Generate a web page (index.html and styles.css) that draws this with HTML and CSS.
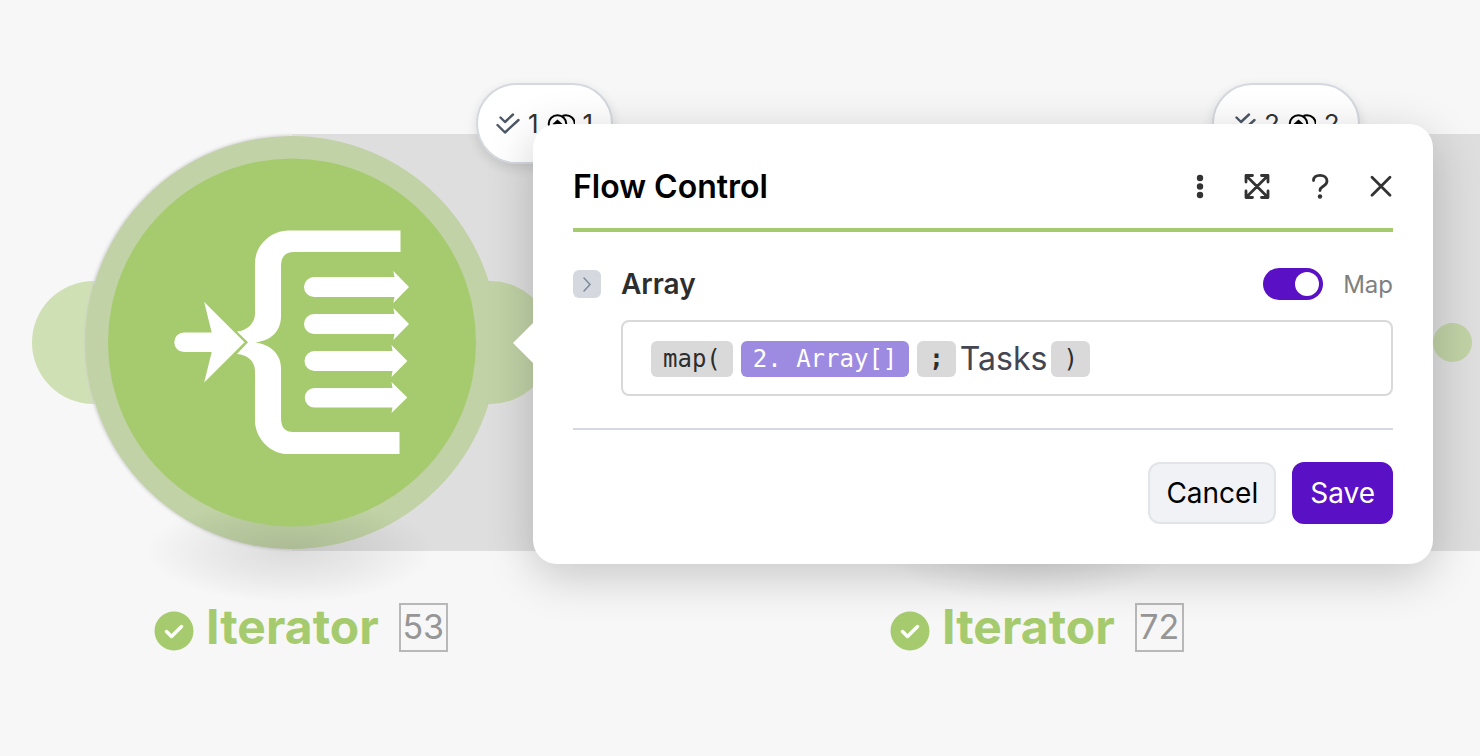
FILE: index.html
```html
<!DOCTYPE html>
<html lang="en">
<head>
<meta charset="utf-8">
<title>Flow Control</title>
<link rel="stylesheet" href="styles.css">
</head>
<body>
<main class="canvas">
  <div class="track"></div>
  <svg class="node" width="560" height="500" viewBox="0 120 560 500" aria-hidden="true">
    <defs>
      <radialGradient id="ground"><stop offset="0" stop-color="#000" stop-opacity=".11"/><stop offset=".5" stop-color="#000" stop-opacity=".06"/><stop offset="1" stop-color="#000" stop-opacity="0"/></radialGradient>
      <filter id="soft" x="-5%" y="-5%" width="110%" height="110%"><feGaussianBlur stdDeviation="1.5"/></filter>
    </defs>
    <circle cx="93.500" cy="342.500" r="61.500" fill="#cfe0b4"/>
    <circle cx="490.500" cy="342.500" r="61.500" fill="#c1d2a6"/>
    <path d="M292 135a207.500 207.500 0 0 0 0 415" fill="#d3d3d3" filter="url(#soft)"/>
    <path d="M94 281a208 208 0 0 0 0 123z" fill="#c4d5aa"/>
    <ellipse cx="292" cy="342.500" rx="206" ry="206.500" fill="#c1d2a6"/>
    <ellipse cx="290" cy="551" rx="145" ry="52" fill="url(#ground)"/>
    <circle cx="292" cy="342.500" r="184" fill="#a6cb6f"/>
    <g fill="#fff">
      <path d="M400.500 230.500H288C270 231 255 246 255 263V314C255 323 247 331 237 331.500L248 342.300L237 354C247 354.500 255 361 255 371V422C256 439 270 453 286 454H399.500V432H293Q281 432 281 418V368C281 354 270 344 255 342.500C270 341 281 332 281 316V266Q281 252 294 252H400.500z"/>
      <path d="M184 332.500H211.700L204.200 302L244.500 342.300L204.200 382.500L211.700 352H184A9.750 9.750 0 0 1 184 332.500z"/>
      <path id="out" d="M314 277H394.500L393.300 271L409 287L393.300 303L394.500 297H314A10 10 0 0 1 314 277z"/>
      <use href="#out" y="37"/>
      <path d="M314.500 351H392.500L391.500 345L407.300 361L391.500 377L392.500 371H314.500A10 10 0 0 1 314.500 351z"/>
      <path d="M314.500 388H392.500L391.500 382L407.300 397.500L391.500 413L392.500 407.500H314.500A9.750 9.750 0 0 1 314.500 388z"/>
    </g>
  </svg>
  <div class="ground-shadow"></div>
  <div class="port"></div>

  <div class="bubble bubble-first">
    <svg width="24" height="24" viewBox="0 0 24 24" class="ticks"><path d="M4.500 5.500l4.500 4.500 8-7.500M1.500 13l7.500 7.500L22.500 8"/></svg>
    <span>1</span>
    <svg width="28" height="24" viewBox="0 0 28 24" class="coins"><circle cx="10.500" cy="12" r="8.800"/><path d="M15.500 4c1.500-.8 2.500-.8 3.500-.8a8.800 8.800 0 0 1 0 17.600c-1 0-2 0-3.500-.8"/><path class="solid" d="M10.500 7.500l5 4.500-5 4.500-5-4.500z"/></svg>
    <span>1</span>
  </div>
  <div class="bubble bubble-second">
    <svg width="24" height="24" viewBox="0 0 24 24" class="ticks"><path d="M4.500 5.500l4.500 4.500 8-7.500M1.500 13l7.500 7.500L22.500 8"/></svg>
    <span>2</span>
    <svg width="28" height="24" viewBox="0 0 28 24" class="coins"><circle cx="10.500" cy="12" r="8.800"/><path d="M15.500 4c1.500-.8 2.500-.8 3.500-.8a8.800 8.800 0 0 1 0 17.600c-1 0-2 0-3.500-.8"/><path class="solid" d="M10.500 7.500l5 4.500-5 4.500-5-4.500z"/></svg>
    <span>2</span>
  </div>

  <div class="caption caption-first">
    <svg width="40" height="40" viewBox="0 0 40 40" class="badge"><circle cx="20" cy="20" r="19.500"/><path d="M12.500 20.500l5 5 10-10"/></svg>
    <strong>Iterator</strong><span class="number">53</span>
  </div>
  <div class="caption caption-second">
    <svg width="40" height="40" viewBox="0 0 40 40" class="badge"><circle cx="20" cy="20" r="19.500"/><path d="M12.500 20.500l5 5 10-10"/></svg>
    <strong>Iterator</strong><span class="number">72</span>
  </div>

  <form class="dialog" role="dialog" aria-labelledby="title">
    <header class="head">
      <h1 id="title">Flow Control</h1>
      <div class="tools">
        <button type="button" aria-label="More"><svg width="8" height="28" viewBox="0 0 8 28"><g fill="#333"><circle cx="4" cy="5" r="3.200"/><circle cx="4" cy="13.500" r="3.200"/><circle cx="4" cy="22" r="3.200"/></g></svg></button>
        <button type="button" aria-label="Expand"><svg width="26" height="28" viewBox="0 0 26 28" class="line"><path d="M2 9V2.500h6.500M17.500 2.500H24V9M24 18v6.500h-6.500M8.500 24.500H2V18M2.500 3l21 21M23.500 3l-21 21"/></svg></button>
        <button type="button" aria-label="Help"><svg width="20" height="28" viewBox="0 0 20 28" class="line"><path d="M3.500 7.500C3.500 4 6 2.300 10 2.300s7 2.200 7 5.700-2.500 4.500-4.500 5.800c-2 1.200-2.500 1.700-2.500 3.700"/><circle cx="10" cy="23.500" r="2.200" class="dot"/></svg></button>
        <button type="button" aria-label="Close"><svg width="22" height="28" viewBox="0 0 22 28" class="line"><path d="M2 4.200l18 18M20 4.200l-18 18"/></svg></button>
      </div>
    </header>
    <div class="field-head">
      <button type="button" class="fold" aria-label="Expand field"><svg width="28" height="28" viewBox="0 0 28 28"><path d="M11 8l6 6.500-6 6.500"/></svg></button>
      <span class="field-name" id="field">Array</span>
      <label class="map"><input type="checkbox" role="switch" checked>Map</label>
    </div>
    <div class="formula" role="textbox" contenteditable="true" spellcheck="false" aria-labelledby="field"><span class="chip">map(</span><span class="chip chip-value">2. Array[]</span><span class="chip chip-sep">;</span><span class="word">Tasks</span><span class="chip">)</span></div>
    <footer class="foot">
      <button type="button" class="btn">Cancel</button>
      <button type="submit" class="btn btn-main">Save</button>
    </footer>
  </form>
</main>
</body>
</html>
```
FILE: styles.css
```css
* { box-sizing: border-box; }
body { margin: 0; background: #f7f7f7; font-family: Inter, "Liberation Sans", sans-serif; }
button { font: inherit; border: 0; padding: 0; background: none; cursor: pointer; }
svg { display: block; flex: none; }

.canvas { position: relative; min-height: 100vh; overflow: hidden; }
.track { position: absolute; left: 292px; right: 0; top: 134px; height: 417px; background: #dedede; }
.node { position: absolute; left: 0; top: 120px; }
.ground-shadow {
  position: absolute; left: 882px; top: 499px; width: 290px; height: 104px;
  background: radial-gradient(closest-side, rgba(0, 0, 0, .11), rgba(0, 0, 0, .06) 50%, transparent);
}
.port { position: absolute; left: 1433px; top: 323px; width: 39px; height: 39px; border-radius: 50%; background: #c1d2a6; }

.bubble {
  position: absolute; top: 83px; height: 81px; padding: 0 18px;
  display: flex; align-items: center; gap: 8px;
  border: 2px solid #d5d9df; border-radius: 41px; background: #fff;
  box-shadow: 0 4px 12px rgba(0, 0, 0, .12);
  font-size: 26px; color: #333;
}
.bubble-first { left: 476px; }
.bubble-second { left: 1212px; }
.ticks { fill: none; stroke: #4d5766; stroke-width: 2.400; stroke-linecap: round; stroke-linejoin: round; }
.coins { fill: none; stroke: #000; stroke-width: 2; }
.coins .solid { fill: #000; stroke: none; }

.caption { position: absolute; top: 598px; display: flex; align-items: center; }
.caption-first { left: 154px; }
.caption-second { left: 890px; }
.caption strong { margin-left: 12px; font-size: 48px; line-height: 58px; font-weight: 700; color: #a6cb6f; }
.badge { fill: #a6cb6f; margin-top: 8px; }
.badge path { fill: none; stroke: #fff; stroke-width: 3.500; stroke-linecap: round; stroke-linejoin: round; }
.number {
  margin-left: 20px; width: 49px; height: 49px; border: 2px solid #b8b8b8;
  font-size: 34px; line-height: 44px; text-align: center; color: #969696;
}

.dialog {
  position: absolute; left: 533px; top: 124px; width: 900px; padding: 40px;
  border-radius: 24px; background: #fff; box-shadow: 0 12px 48px rgba(0, 0, 0, .2);
}
.dialog::before {
  content: ""; position: absolute; left: -20px; top: 199px;
  border: 20px solid transparent; border-left: 0; border-right-color: #fff;
}
.head { display: flex; align-items: center; justify-content: space-between; height: 68px; padding-bottom: 18px; border-bottom: 4px solid #a6cb6f; }
.head h1 { margin: 0; font-size: 32px; line-height: 40px; font-weight: 600; color: #000; }
.tools { display: flex; gap: 40px; padding-right: 1px; }
.line { fill: none; stroke: #333; stroke-width: 2.800; stroke-linecap: round; stroke-linejoin: round; }
.line .dot { fill: #333; stroke: none; }

.field-head { display: flex; align-items: center; height: 40px; margin-top: 32px; }
.fold { border-radius: 6px; background: #d5d9df; }
.fold path { fill: none; stroke: #7c889b; stroke-width: 1.500; stroke-linecap: round; }
.field-name { margin-left: 20px; font-size: 28px; font-weight: 600; color: #2d2d2d; }
.map { display: flex; align-items: center; gap: 20px; margin-left: auto; font-size: 24px; color: #808080; }
.map input { appearance: none; margin: 0; width: 60px; height: 32px; padding: 4px; border-radius: 16px; background: #5a10c5; }
.map input::before { content: ""; display: block; width: 24px; height: 24px; border-radius: 50%; background: #fff; }
.map input:checked::before { margin-left: auto; }

.formula {
  display: flex; align-items: center; height: 76px; margin: 16px 0 32px 48px; padding: 2px 28px 0;
  border: 2px solid #d9d9d9; border-radius: 8px; outline: none;
}
.chip {
  height: 36px; margin-right: 8px; padding: 0 12px; border-radius: 6px;
  background: #d9d9d9; color: #2d2d2d;
  font-family: "DejaVu Sans Mono", "Liberation Mono", monospace; font-size: 24px; line-height: 36px; white-space: pre;
}
.chip-value { background: #9d8be2; color: #fff; }
.chip-sep { margin-right: 4px; font-weight: 700; }
.word { margin-right: 4px; font-size: 32px; line-height: 40px; color: #434550; }

.foot { display: flex; justify-content: flex-end; gap: 16px; padding-top: 32px; border-top: 2px solid #d5d9df; }
.btn { height: 62px; padding: 0 16px; border: 2px solid #e3e4e9; border-radius: 12px; background: #f1f2f5; font-size: 28px; color: #000; }
.btn-main { border-color: #5a10c5; background: #5a10c5; color: #fff; }
```
